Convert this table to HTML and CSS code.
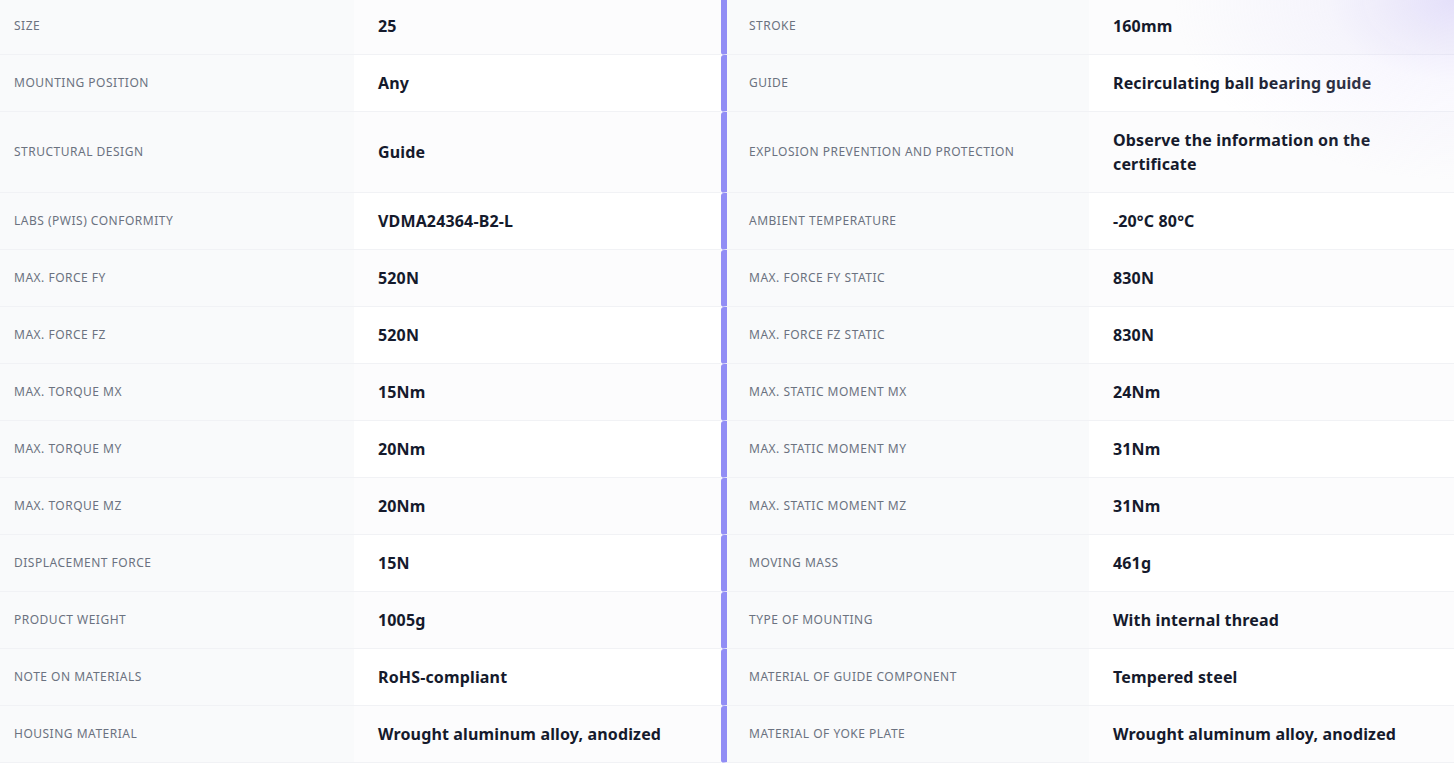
FILE: index.html
```html
<!DOCTYPE html>
<html lang="en">
<head>
<meta charset="utf-8">
<title>Specifications</title>
<link rel="stylesheet" href="styles.css">
</head>
<body>
<div class="glow"></div>
<div class="specs">
  <div class="row"><div class="lab">Size</div><div class="val">25</div><div class="lab lab-r">Stroke</div><div class="val">160mm</div></div>
  <div class="row"><div class="lab">Mounting position</div><div class="val">Any</div><div class="lab lab-r">Guide</div><div class="val">Recirculating ball bearing guide</div></div>
  <div class="row"><div class="lab">Structural design</div><div class="val">Guide</div><div class="lab lab-r">Explosion prevention and protection</div><div class="val">Observe the information on the certificate</div></div>
  <div class="row"><div class="lab">LABS (PWIS) conformity</div><div class="val">VDMA24364-B2-L</div><div class="lab lab-r">Ambient temperature</div><div class="val">-20°C 80°C</div></div>
  <div class="row"><div class="lab">Max. force Fy</div><div class="val">520N</div><div class="lab lab-r">Max. force Fy static</div><div class="val">830N</div></div>
  <div class="row"><div class="lab">Max. force Fz</div><div class="val">520N</div><div class="lab lab-r">Max. force Fz static</div><div class="val">830N</div></div>
  <div class="row"><div class="lab">Max. torque Mx</div><div class="val">15Nm</div><div class="lab lab-r">Max. static moment Mx</div><div class="val">24Nm</div></div>
  <div class="row"><div class="lab">Max. torque My</div><div class="val">20Nm</div><div class="lab lab-r">Max. static moment My</div><div class="val">31Nm</div></div>
  <div class="row"><div class="lab">Max. torque Mz</div><div class="val">20Nm</div><div class="lab lab-r">Max. static moment Mz</div><div class="val">31Nm</div></div>
  <div class="row"><div class="lab">Displacement force</div><div class="val">15N</div><div class="lab lab-r">Moving mass</div><div class="val">461g</div></div>
  <div class="row"><div class="lab">Product weight</div><div class="val">1005g</div><div class="lab lab-r">Type of mounting</div><div class="val">With internal thread</div></div>
  <div class="row"><div class="lab">Note on materials</div><div class="val">RoHS-compliant</div><div class="lab lab-r">Material of guide component</div><div class="val">Tempered steel</div></div>
  <div class="row"><div class="lab">Housing material</div><div class="val">Wrought aluminum alloy, anodized</div><div class="lab lab-r">Material of yoke plate</div><div class="val">Wrought aluminum alloy, anodized</div></div>
</div>
</body>
</html>
```
FILE: styles.css
```css
html, body {
  margin: 0;
  padding: 0;
  background: #ffffff;
}
body {
  font-family: "Noto Sans", "Open Sans", sans-serif;
  overflow: hidden;
}
.glow {
  position: fixed;
  top: 0;
  right: 0;
  width: 500px;
  height: 300px;
  pointer-events: none;
  background: radial-gradient(ellipse 280px 180px at 100% 0%, rgba(196, 186, 245, 0.42) 0%, rgba(220, 214, 250, 0.18) 45%, rgba(255, 255, 255, 0) 100%);
  z-index: 2;
}
.specs {
  margin-top: -2px;
  display: flex;
  flex-direction: column;
}
.row {
  display: grid;
  grid-template-columns: 354px 367px 368px 365px;
}
.lab, .val {
  display: flex;
  align-items: center;
  border-bottom: 1px solid #f1f2f5;
}
.lab {
  background: #f9fafb;
  padding: 16px 14px;
  font-size: 12px;
  line-height: 24px;
  color: #6b7280;
  text-transform: uppercase;
  letter-spacing: 0.5px;
}
.lab-r {
  border-left: 6px solid #918df5;
  border-top-left-radius: 3px;
  border-bottom-left-radius: 3px;
  padding-left: 22px;
}
.val {
  background: #ffffff;
  padding: 16px 24px;
  font-size: 16px;
  line-height: 24px;
  font-weight: 700;
  letter-spacing: 0.15px;
  color: #151a2c;
}
.row:nth-child(odd) .val {
  background: #fcfcfd;
}
```
